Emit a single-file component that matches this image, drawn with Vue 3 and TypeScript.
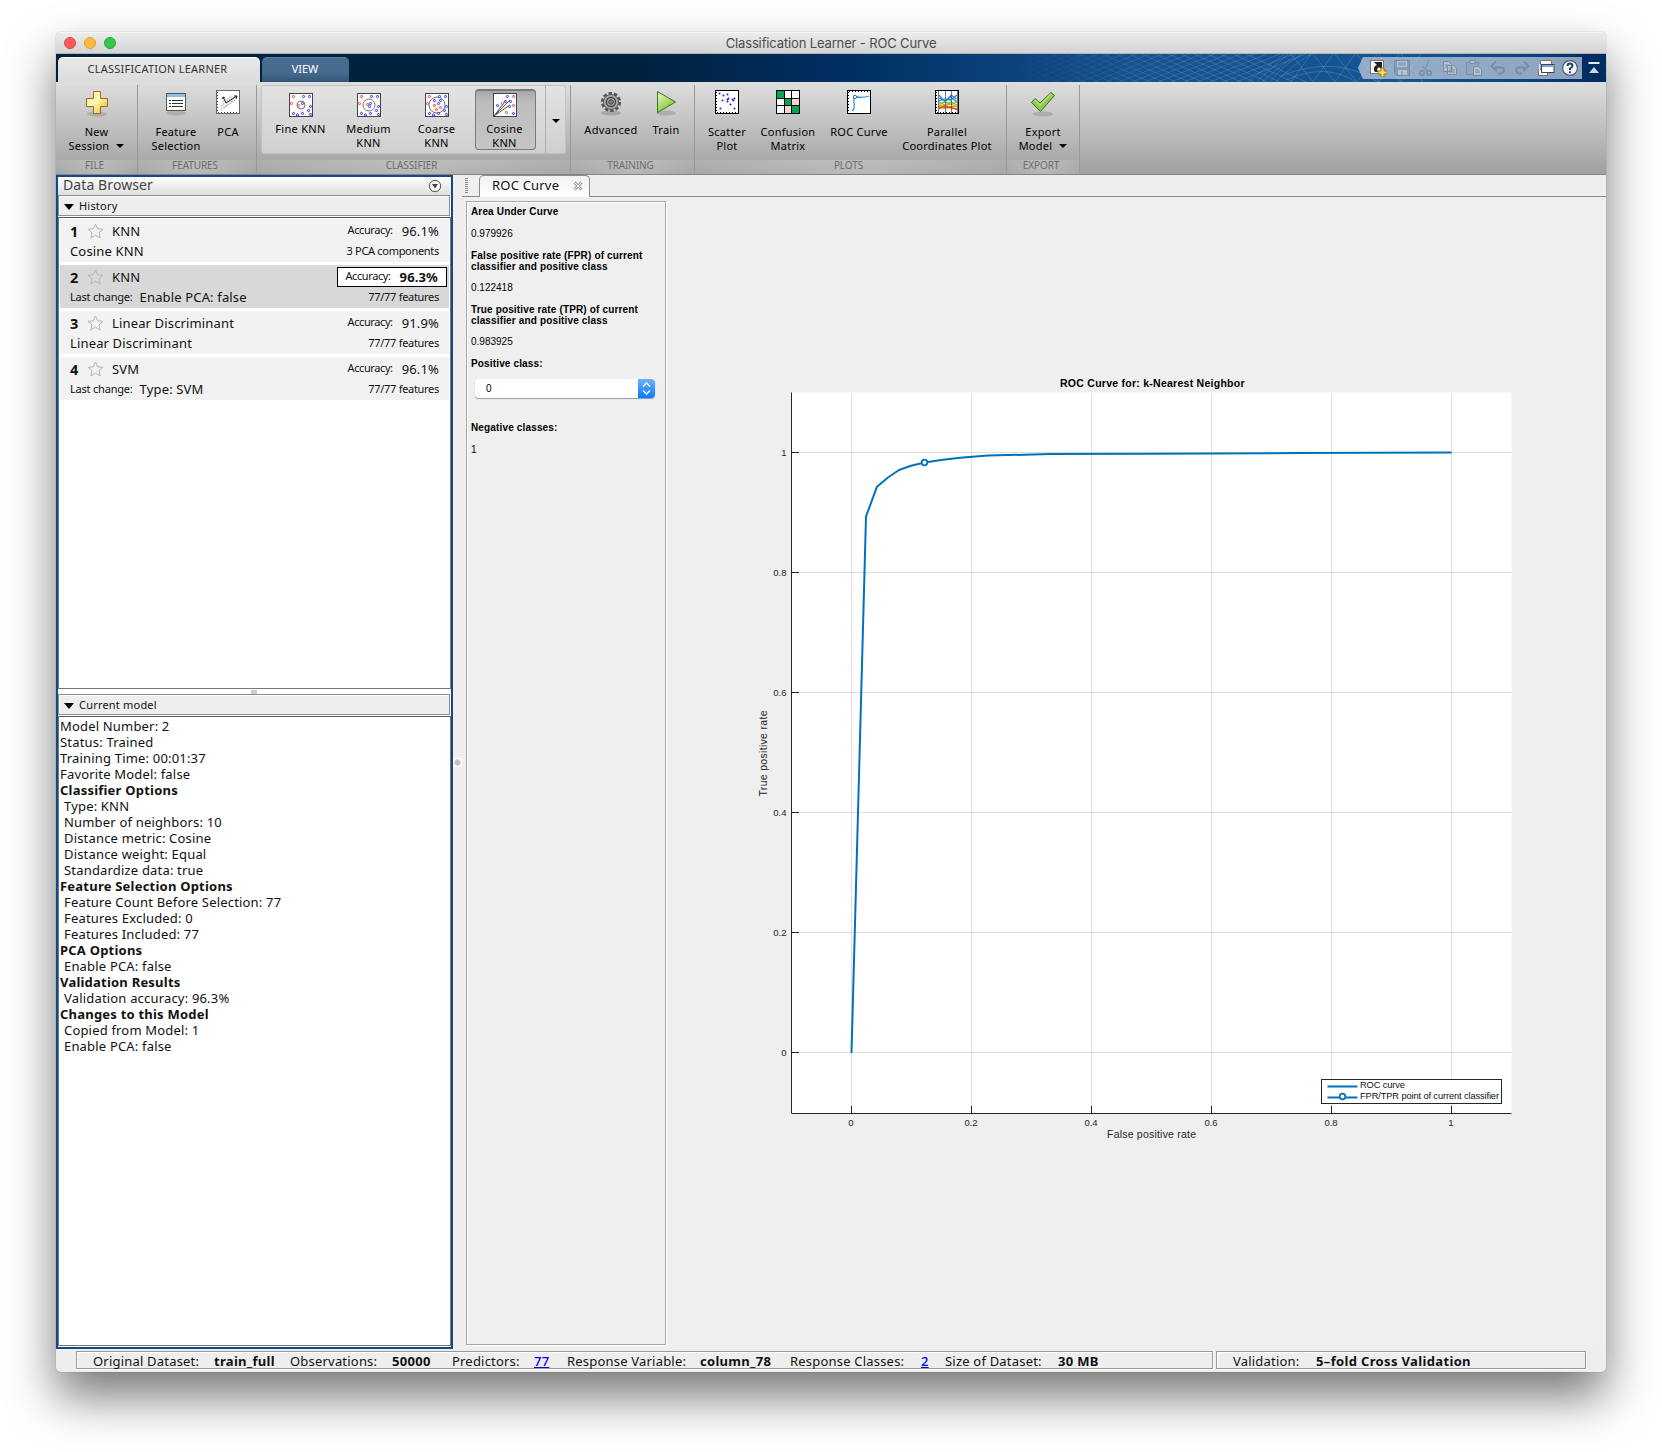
<script setup lang="ts">
interface Model {
  id: number
  name: string
  prefix?: string
  detail: string
  accuracy: string
  features: string
  selected?: boolean
}

const models: Model[] = [
  { id: 1, name: 'KNN', detail: 'Cosine KNN', accuracy: '96.1%', features: '3 PCA components' },
  { id: 2, name: 'KNN', prefix: 'Last change:', detail: 'Enable PCA: false', accuracy: '96.3%', features: '77/77 features', selected: true },
  { id: 3, name: 'Linear Discriminant', detail: 'Linear Discriminant', accuracy: '91.9%', features: '77/77 features' },
  { id: 4, name: 'SVM', prefix: 'Last change:', detail: 'Type: SVM', accuracy: '96.1%', features: '77/77 features' },
]

interface Line { text: string; heading?: boolean; top?: boolean }
const details: Line[] = [
  { text: 'Model Number: 2', top: true },
  { text: 'Status: Trained', top: true },
  { text: 'Training Time: 00:01:37', top: true },
  { text: 'Favorite Model: false', top: true },
  { text: 'Classifier Options', heading: true },
  { text: 'Type: KNN' },
  { text: 'Number of neighbors: 10' },
  { text: 'Distance metric: Cosine' },
  { text: 'Distance weight: Equal' },
  { text: 'Standardize data: true' },
  { text: 'Feature Selection Options', heading: true },
  { text: 'Feature Count Before Selection: 77' },
  { text: 'Features Excluded: 0' },
  { text: 'Features Included: 77' },
  { text: 'PCA Options', heading: true },
  { text: 'Enable PCA: false' },
  { text: 'Validation Results', heading: true },
  { text: 'Validation accuracy: 96.3%' },
  { text: 'Changes to this Model', heading: true },
  { text: 'Copied from Model: 1' },
  { text: 'Enable PCA: false' },
]

interface Dot { x: number; y: number; c: string }
const B = '#2020f0'
const R = '#f03030'
const rim: Dot[] = [
  { x: 4.5, y: 3.5, c: R }, { x: 14.5, y: 3.5, c: B }, { x: 20.5, y: 3.5, c: B },
  { x: 2.5, y: 10.5, c: R }, { x: 21.5, y: 13.5, c: B }, { x: 4.5, y: 20.5, c: B },
  { x: 8.5, y: 22, c: B }, { x: 13.5, y: 20.5, c: B }, { x: 19.5, y: 17.5, c: B }, { x: 21.5, y: 21.5, c: B },
]
interface Knn { key: string; label: string[]; r: number; dots: Dot[] }
const gallery: Knn[] = [
  { key: 'fine', label: ['Fine KNN'], r: 4, dots: [...rim, { x: 9.5, y: 12.5, c: R }, { x: 13.5, y: 10.5, c: B }] },
  { key: 'medium', label: ['Medium', 'KNN'], r: 6, dots: [...rim, { x: 10.5, y: 11.5, c: R }, { x: 13.5, y: 10.5, c: B }, { x: 12.5, y: 13.5, c: B }] },
  { key: 'coarse', label: ['Coarse', 'KNN'], r: 8, dots: [...rim, { x: 9.5, y: 7.5, c: B }, { x: 15.5, y: 7.5, c: B }, { x: 13.5, y: 10.5, c: B }, { x: 9.5, y: 12.5, c: R }, { x: 15.5, y: 14.5, c: R }, { x: 11.5, y: 16.5, c: R }] },
  { key: 'cosine', label: ['Cosine', 'KNN'], r: 0, dots: [{ x: 14.5, y: 3.5, c: B }, { x: 20.5, y: 3.5, c: R }, { x: 9.5, y: 10.5, c: R }, { x: 12.5, y: 8.5, c: B }, { x: 17.5, y: 8.5, c: B }, { x: 4.5, y: 12.5, c: B }, { x: 16.5, y: 13.5, c: B }, { x: 20.5, y: 12.5, c: R }, { x: 13.5, y: 19.5, c: R }, { x: 20.5, y: 20.5, c: B }] },
]

const ticks = [0, 0.2, 0.4, 0.6, 0.8, 1]
const px = (v: number) => 185.5 + v * 600
const py = (v: number) => 855.5 - v * 600
const curve: [number, number][] = [
  [851.5, 1053], [866, 516.5], [877, 486.7], [888, 477.5], [899, 470], [911, 465.8], [924.5, 462.5],
  [943, 459.7], [960, 457.8], [988, 455.6], [1050, 454.1], [1150, 453.7], [1300, 453.1], [1451.5, 452.5],
]
const curvePoints = curve.map(([x, y]) => `${x - 666},${y - 197}`).join(' ')

const scatter = [[4, 3], [8, 5], [12, 4], [7, 10], [13, 8], [12, 11], [17, 9], [19, 8], [15, 14], [5, 18], [19, 18], [12, 9], [18, 10]]
const meshLeft = Array.from({ length: 21 }, (_, i) => i * 13)
const meshRight = Array.from({ length: 6 }, (_, i) => 285 + i * 22)
</script>

<template>
  <div class="stage">
    <div class="window">
      <header class="titlebar">
        <span class="lights"><i class="red"></i><i class="amber"></i><i class="green"></i></span>
        <span class="wtitle">Classification Learner - ROC Curve</span>
      </header>

      <nav class="tabbar">
        <svg class="mesh" width="420" height="28" viewBox="0 0 420 28">
          <defs>
            <linearGradient id="fade" gradientUnits="userSpaceOnUse" x1="10" y1="0" x2="400" y2="0"><stop offset="0" stop-color="#fff" stop-opacity="0" /><stop offset=".4" stop-color="#fff" stop-opacity=".12" /><stop offset="1" stop-color="#fff" stop-opacity=".16" /></linearGradient>
          </defs>
          <g fill="none" stroke="url(#fade)">
            <path v-for="x in meshLeft" :key="'a' + x" :d="`M${x - 20} 0L${x + 40} 28`" />
            <path v-for="x in meshLeft" :key="'b' + x" :d="`M${x + 40} 0L${x - 30} 28`" />
            <path v-for="x in meshRight" :key="'c' + x" :d="`M${x} 0L${x + 22} 28M${x + 20} 0L${x} 28`" />
            <path d="M242 28L278 0M250 28L282 0M256 28L290 0M270 28Q285 12 305 0M264 28Q278 10 296 0M275 22Q330 0 372 28M280 26Q320 8 350 28" />
          </g>
        </svg>
        <div class="tab active">CLASSIFICATION LEARNER</div>
        <div class="tab">VIEW</div>
        <div class="quick">
          <svg class="quickshape" width="224" height="22" viewBox="0 0 224 22"><path d="M0 11L5 0H224V22H5Z" fill="#c4cfdd" fill-opacity=".72" /></svg>
          <svg width="18" height="18" viewBox="0 0 18 18"><rect x="1.500" y="1.500" width="13" height="13" fill="#fff" stroke="#777" /><rect x="3" y="3" width="10" height="10" fill="#f6f6f6" /><path d="M5 3h8v8l-3-3-2 2 1 3H6C4 10 5 7 8 6Z" fill="#222" /><path d="M12 9h3v3h3v3h-3v3h-3v-3H9v-3h3Z" fill="#ffdf63" stroke="#a17413" /></svg>
          <svg class="dim" width="18" height="18" viewBox="0 0 18 18"><path d="M1.500 1.500h15v15h-13l-2-2Z" fill="#8499b1" stroke="#73849a" /><path d="M4 2h10v6H4ZM5 11h9v5H5Z" fill="#bccad8" /><path d="M5 4h8M5 6h8M9 12v4" stroke="#73849a" /></svg>
          <svg class="dim" width="18" height="18" viewBox="0 0 18 18"><path d="M12 1L8 11M5 7l6 5" stroke="#8292a8" stroke-width="1.500" /><circle cx="5" cy="14" r="2.200" fill="none" stroke="#73849a" stroke-width="1.500" /><circle cx="12" cy="14" r="2.200" fill="none" stroke="#73849a" stroke-width="1.500" /></svg>
          <svg class="dim" width="18" height="18" viewBox="0 0 18 18"><path d="M2.500 2.500h5l3 3v7h-8ZM6.500 6.500h6l3 3v6h-9Z" fill="#bccad8" stroke="#73849a" /><path d="M4 6h4M4 8h2M8 9h4M8 11h6M8 13h6" stroke="#73849a" /></svg>
          <svg class="dim" width="18" height="18" viewBox="0 0 18 18"><path d="M1.500 3.500h12v12h-12Z" fill="#94a6bb" stroke="#73849a" /><path d="M5 1.500h5v3H5Z" fill="#bccad8" stroke="#73849a" /><path d="M8.500 7.500h5l3 3v6h-8Z" fill="#bccad8" stroke="#73849a" /><path d="M10 11h4M10 13h5" stroke="#73849a" /></svg>
          <svg class="dim" width="18" height="18" viewBox="0 0 18 18"><path d="M7 2.500L2.500 7 7 11.500V8.500h5q3 0 3 2.500t-3 3.500H9" fill="none" stroke="#73849a" stroke-width="1.800" /></svg>
          <svg class="dim" width="18" height="18" viewBox="0 0 18 18"><path d="M11 2.500L15.500 7 11 11.500V8.500H6q-3 0-3 2.500t3 3.500h3" fill="none" stroke="#73849a" stroke-width="1.800" /></svg>
          <svg width="18" height="18" viewBox="0 0 18 18"><path d="M3.500 1.500h11v4h-11ZM1.500 10.500h9v6h-9Z" fill="#f7f7f7" stroke="#777" /><path d="M2.500 5v6" stroke="#eee" /><rect x="4.500" y="5.500" width="12.500" height="8" fill="#fff" stroke="#445" /><path d="M5 6h11.500v2H5Z" fill="#72a8dc" /></svg>
          <svg width="18" height="18" viewBox="0 0 18 18"><circle cx="9" cy="9" r="7.400" fill="#f5f5f5" stroke="#465d7b" stroke-width="1.200" /><path d="M6.500 7q0-2.500 2.500-2.500T11.500 7Q11.500 8 9 9.500v1.500M9 12.300v2" fill="none" stroke="#21436d" stroke-width="2" /></svg>
        </div>
        <svg class="collapse" width="12" height="12" viewBox="0 0 12 12"><path d="M.5 1h11" stroke="#e6edf4" stroke-width="2" /><path d="M6 5l5 6H1Z" fill="#c9d7e6" /></svg>
      </nav>

      <section class="ribbon">
        <div class="group g-file">
          <div class="tools">
            <button class="tool t-new">
              <svg width="26" height="30" viewBox="0 0 26 30"><defs><linearGradient id="gold" x2="1" y2="1"><stop offset="0" stop-color="#ffe98f" /><stop offset=".45" stop-color="#fff8b8" /><stop offset="1" stop-color="#eab216" /></linearGradient></defs><ellipse cx="13" cy="25" rx="10" ry="2.500" fill="#777" opacity=".35" /><path d="M9.500 2.500h7v7h7v8h-7v7h-7v-7h-7v-8h7Z" fill="url(#gold)" stroke="#957126" /></svg>
              <span>New</span><span>Session<i class="caret"></i></span>
            </button>
          </div>
          <footer>FILE</footer>
        </div>
        <div class="group g-features">
          <div class="tools">
            <button class="tool t-feature">
              <svg width="26" height="30" viewBox="0 0 26 30"><ellipse cx="13" cy="24" rx="10" ry="2.500" fill="#777" opacity=".3" /><rect x="3.500" y="4.500" width="19" height="17" fill="#fff" stroke="#555" /><path d="M4 5h18v3H4Z" fill="#8cc0e8" /><path d="M9 11.500h11M9 14.500h11M9 17.500h11M6 11.500h2M6 14.500h2M6 17.500h2" stroke="#333" /></svg>
              <span>Feature</span><span>Selection</span>
            </button>
            <button class="tool t-pca">
              <svg width="26" height="30" viewBox="0 0 26 30"><rect x="1.500" y="1.500" width="23" height="23" fill="#fff" stroke="#666" /><path d="M2.500 3v20M3 23.500h20" stroke="#444" stroke-dasharray="1 2" /><g stroke="#bbb" stroke-width="1.500" stroke-dasharray="1.500 1"><path d="M6 17l13-9M6 20l12-8M9 19l12-9M8 13l9-6" /></g><path d="M11 14l11-7M11 14L8 8M19 7h3l-1 3M7 10l1-2 2 1" fill="none" stroke="#222" /></svg>
              <span>PCA</span>
            </button>
          </div>
          <footer>FEATURES</footer>
        </div>
        <div class="group g-classifier">
          <div class="tools">
            <div class="gallery">
              <button v-for="g in gallery" :key="g.key" class="gtool" :class="[g.key, { on: g.key === 'cosine' }]">
                <svg width="24" height="24" viewBox="0 0 24 24"><rect x=".5" y=".5" width="23" height="23" fill="#fff" stroke="#444" />
                  <circle v-if="g.r" cx="12" cy="12" :r="g.r" fill="none" stroke="#777" />
                  <path v-else d="M1 23L17 7M1 23L13 7M1 23L17 12" fill="none" stroke="#555" />
                  <circle v-for="(d, i) in g.dots" :key="i" :cx="d.x" :cy="d.y" r="1.100" fill="#fff" :stroke="d.c" stroke-width=".9" />
                </svg>
                <span v-for="l in g.label" :key="l">{{ l }}</span>
              </button>
              <div class="more"><i class="caret"></i></div>
            </div>
          </div>
          <footer>CLASSIFIER</footer>
        </div>
        <div class="group g-training">
          <div class="tools">
            <button class="tool t-adv short">
              <svg width="26" height="30" viewBox="0 0 26 30"><ellipse cx="13" cy="24" rx="10" ry="2.500" fill="#666" opacity=".35" /><circle cx="13" cy="13" r="8.800" fill="none" stroke="#555" stroke-width="2.600" stroke-dasharray="3.500 2.030" /><circle cx="13" cy="13" r="7.500" fill="#aaa" stroke="#555" /><circle cx="13" cy="13" r="4.500" fill="#bbb" stroke="#444" stroke-width="1.500" /><circle cx="13" cy="13" r="2.300" fill="#888" stroke="#333" /></svg>
              <span>Advanced</span>
            </button>
            <button class="tool t-train short">
              <svg width="26" height="30" viewBox="0 0 26 30"><defs><linearGradient id="play" x2=".6" y2="1"><stop offset="0" stop-color="#f0f8cd" /><stop offset="1" stop-color="#7cc421" /></linearGradient></defs><ellipse cx="13" cy="24" rx="10" ry="2.500" fill="#777" opacity=".35" /><path d="M4.500 2.500L22.500 13 4.500 23.500Z" fill="url(#play)" stroke="#35751f" /></svg>
              <span>Train</span>
            </button>
          </div>
          <footer>TRAINING</footer>
        </div>
        <div class="group g-plots">
          <div class="tools">
            <button class="tool t-scatter">
              <svg width="26" height="30" viewBox="0 0 26 30"><rect x="1.500" y="1.500" width="23" height="23" fill="#fff" stroke="#000" /><path d="M2.500 3v20M3 23.500h20" stroke="#000" stroke-dasharray="1 2" /><circle v-for="([x, y], i) in scatter" :key="i" :cx="x + 1.5" :cy="y + 1.5" r="1" fill="#2020f0" /></svg>
              <span>Scatter</span><span>Plot</span>
            </button>
            <button class="tool t-conf">
              <svg width="26" height="30" viewBox="0 0 26 30"><rect x="1.500" y="1.500" width="23" height="23" fill="#fff" stroke="#000" /><path d="M2 2h7v7H2ZM10 10h7v7h-7ZM17 17h7v7h-7Z" fill="#00a651" /><path d="M17 10h7v7h-7ZM10 17h7v7h-7Z" fill="#fdd5d0" /><path d="M9.500 2v22M16.500 2v22M2 9.500h22M2 16.500h22" stroke="#000" /></svg>
              <span>Confusion</span><span>Matrix</span>
            </button>
            <button class="tool t-roc">
              <svg width="26" height="30" viewBox="0 0 26 30"><rect x="1.500" y="1.500" width="23" height="23" fill="#fff" stroke="#000" /><path d="M2.500 3v20M3 2.500h20" stroke="#000" stroke-dasharray="1 2" /><path d="M6 22Q9 20 8 14T11 8q7 1 12-1" fill="none" stroke="#3c8ee8" stroke-width="1.300" /><circle cx="9" cy="8" r="1.700" fill="#fff" stroke="#1b78dd" /></svg>
              <span>ROC Curve</span>
            </button>
            <button class="tool t-par">
              <svg width="26" height="30" viewBox="0 0 26 30"><rect x="1.500" y="1.500" width="23" height="23" fill="#fff" stroke="#000" /><path d="M2.500 3v20M3 23.500h20" stroke="#000" stroke-dasharray="1 2" /><g fill="none" stroke-width="1.300"><path d="M5 6l6 7 6-7 6 4M5 9l6 3 6-4 6 5M5 12l6-2 6 1 6-5" stroke="#2683ee" /><path d="M5 15l6-2 6 2 6-2M5 13l6 3 6-3 6 3" stroke="#73c72b" /><path d="M5 17l6-1 6-1 6 3M5 16l6 1 6 1 6-1" stroke="#e5a91d" /><path d="M5 20l6-3 6 2 6 1M5 18l6 1 6-1 6 3" stroke="#f0491c" /></g><path d="M4.500 2v22M11.500 2v22M17.500 2v22M23.500 2v22" stroke="#555" stroke-width=".8" /></svg>
              <span>Parallel</span><span>Coordinates Plot</span>
            </button>
          </div>
          <footer>PLOTS</footer>
        </div>
        <div class="group g-export">
          <div class="tools">
            <button class="tool t-export">
              <svg width="26" height="30" viewBox="0 0 26 30"><ellipse cx="13" cy="25" rx="10" ry="2.500" fill="#777" opacity=".35" /><path d="M1.500 13.500L5 9.500l5 4.500L21 3.500l3.500 3L10.500 22.500Z" fill="#8fce4a" stroke="#2f6e28" /><path d="M5 11l5 5L21 5" fill="none" stroke="#b5e277" stroke-width="1.500" /></svg>
              <span>Export</span><span>Model<i class="caret"></i></span>
            </button>
          </div>
          <footer>EXPORT</footer>
        </div>
      </section>

      <main class="body">
        <aside class="browser">
          <div class="btitle"><span>Data Browser</span>
            <svg width="14" height="14" viewBox="0 0 14 14"><circle cx="7" cy="7" r="5.700" fill="#f5f5f5" stroke="#555" /><path d="M4 5h6L7 9.500Z" fill="#444" /></svg>
          </div>
          <div class="bhead"><i class="tri"></i>History</div>
          <div class="list">
            <div v-for="m in models" :key="m.id" class="item" :class="{ sel: m.selected }">
              <div class="row r1">
                <b>{{ m.id }}</b>
                <svg width="17" height="16" viewBox="0 0 17 16"><path d="M8.500 1l2.200 4.800 5.300.5-4 3.500 1.200 5.200-4.700-2.800L3.800 15 5 9.800 1 6.300l5.300-.5Z" fill="none" stroke="#b4b4b4" /></svg>
                <span class="mname">{{ m.name }}</span>
                <span class="acc"><small>Accuracy:</small><span>{{ m.accuracy }}</span></span>
              </div>
              <div class="row r2">
                <small v-if="m.prefix" class="pre">{{ m.prefix }}</small>
                <span>{{ m.detail }}</span>
                <small class="feat">{{ m.features }}</small>
              </div>
            </div>
          </div>
          <div class="hsplit"><i></i></div>
          <div class="bhead">
            <i class="tri"></i>Current model
          </div>
          <div class="details">
            <div v-for="(l, i) in details" :key="i" :class="{ heading: l.heading, sub: !l.heading && !l.top }">{{ l.text }}</div>
          </div>
        </aside>

        <div class="vsplit"><i></i></div>

        <div class="doc">
          <div class="doctabs">
            <i class="grip"></i>
            <div class="doctab">ROC Curve<svg width="10" height="10" viewBox="0 0 10 10"><path d="M1.500 1.500l7 7M8.500 1.500l-7 7" stroke="#a2a2a2" stroke-width="3" /><path d="M1.500 1.500l7 7M8.500 1.500l-7 7" stroke="#f4f4f4" stroke-width="1" /></svg></div>
          </div>
          <div class="docbody">
            <div class="side">
              <h4>Area Under Curve</h4>
              <p>0.979926</p>
              <h4 class="two">False positive rate (FPR) of current<br>classifier and positive class</h4>
              <p>0.122418</p>
              <h4 class="two">True positive rate (TPR) of current<br>classifier and positive class</h4>
              <p>0.983925</p>
              <h4>Positive class:</h4>
              <div class="select"><span>0</span><svg width="17" height="19" viewBox="0 0 17 19"><path d="M5 7.500L8.500 4 12 7.500M5 11.500L8.500 15 12 11.500" fill="none" stroke="#fff" stroke-width="1.500" /></svg></div>
              <h4>Negative classes:</h4>
              <p>1</p>
            </div>
            <svg class="chart" width="940" height="1152" viewBox="0 0 940 1152">
              <rect x="126" y="195.500" width="719.500" height="720.500" fill="#fff" />
              <g stroke="#262626" stroke-opacity=".15">
                <path v-for="t in ticks" :key="t" :d="`M${px(t)} 196V916M126 ${py(t)}H845.5`" />
              </g>
              <g stroke="#262626">
                <path d="M125.500 195.500V916.500H845.500" fill="none" />
                <path v-for="t in ticks" :key="t" :d="`M${px(t)} 916v-7M126 ${py(t)}h7`" />
              </g>
              <g class="ticks">
                <text v-for="t in ticks" :key="'x' + t" :x="px(t) - .5" y="929" text-anchor="middle">{{ t }}</text>
                <text v-for="t in ticks" :key="'y' + t" x="120.500" :y="py(t) + 3.5" text-anchor="end">{{ t }}</text>
              </g>
              <text class="axis" x="441" y="941" textLength="89">False positive rate</text>
              <text class="axis" transform="translate(101 599.500) rotate(-90)" textLength="86">True positive rate</text>
              <text class="ctitle" x="394" y="190" textLength="184.500">ROC Curve for: k-Nearest Neighbor</text>
              <polyline :points="curvePoints" fill="none" stroke="#0072bd" stroke-width="2" stroke-linejoin="round" />
              <circle cx="258.500" cy="265.500" r="2.800" fill="#fff" stroke="#0072bd" stroke-width="1.700" />
              <rect x="655.500" y="882.500" width="180" height="24" fill="#fff" stroke="#262626" />
              <path d="M661.500 889.500h30M661.500 900.500h30" stroke="#0072bd" stroke-width="2" />
              <circle cx="676.500" cy="899.500" r="2.800" fill="#fff" stroke="#0072bd" stroke-width="1.700" />
              <g class="legend">
                <text x="694" y="891" textLength="45">ROC curve</text>
                <text x="694" y="902" textLength="139">FPR/TPR point of current classifier</text>
              </g>
            </svg>
          </div>
        </div>
      </main>

      <footer class="status">
        <div class="sbox data">
          <span class="k1">Original Dataset:</span><b class="v1">train_full</b>
          <span class="k2">Observations:</span><b class="v2">50000</b>
          <span class="k3">Predictors:</span><a class="v3">77</a>
          <span class="k4">Response Variable:</span><b class="v4">column_78</b>
          <span class="k5">Response Classes:</span><a class="v5">2</a>
          <span class="k6">Size of Dataset:</span><b class="v6">30 MB</b>
        </div>
        <div class="sbox valid"><span class="k7">Validation:</span><b class="fold">5–fold Cross Validation</b></div>
      </footer>
    </div>
  </div>
</template>

<style>
body { background: #fff; overflow: hidden; }
</style>

<style scoped>
* { box-sizing: border-box; }
.stage { width: 1662px; height: 1452px; padding: 32px 56px 80px; overflow: hidden; background: #fff; font-family: "Noto Sans", "Open Sans", sans-serif; color: #111; }
.window { width: 1550px; height: 1340px; display: flex; flex-direction: column; border-radius: 5px; background: #eee; box-shadow: 0 0 1px rgba(0,0,0,.5), 0 25px 48px rgba(0,0,0,.53); overflow: visible; }
.titlebar { flex: none; height: 22px; display: grid; place-items: center; border-radius: 5px 5px 0 0; background: linear-gradient(#ebebeb, #d4d4d4); border-bottom: 1px solid #b3b3b3; border-top: 1px solid #f6f6f6; }
.titlebar > * { grid-area: 1 / 1; }
.lights { justify-self: start; display: flex; gap: 8px; padding-left: 8px; margin-top: -1px; }
.lights i { width: 12px; height: 12px; border-radius: 50%; border: 1px solid #e0443e; background: #fc5b57; }
.lights .amber { border-color: #dfa033; background: #fdbc40; }
.lights .green { border-color: #24a732; background: #34c84a; }
.wtitle { font: 13px/20px Inter, sans-serif; color: #4c4c4c; letter-spacing: -.14px; }

.tabbar { position: relative; flex: none; height: 28px; display: flex; align-items: flex-end; padding-left: 2px; background: linear-gradient(90deg, #00213d 0, #00213d 570px, #003064 800px, #0b3f78 930px, #15518f 1080px, #145595 1350px, #0b4380 1470px, #002d62 1530px); }
.mesh { position: absolute; left: 950px; top: 0; }
.tab { height: 25px; width: 87px; margin-right: 2px; border-radius: 5px 5px 0 0; display: flex; align-items: center; justify-content: center; padding: 0 1px 3px 0; font-size: 11px; letter-spacing: -.1px; color: #fff; background: linear-gradient(#486b90 60%, #315479); border-top: 1px solid #5f7e9f; }
.tab.active { width: 202px; background: linear-gradient(#e8e8e8, #dcdcdc); color: #333; border-top-color: #fff; letter-spacing: .22px; padding-right: 3px; }
.quick { position: relative; margin-left: auto; margin-bottom: 3px; height: 22px; width: 224px; padding-left: 11px; display: flex; align-items: center; gap: 6px; }
.quick svg { position: relative; flex: none; }
.quick .quickshape { position: absolute; left: 0; top: 0; }
.dim { opacity: .8; }
.collapse { margin: 0 6px 8px 6px; }

.ribbon { flex: none; height: 93px; display: flex; background: linear-gradient(#dedede, #a0a0a0); border-bottom: 1px solid #858585; padding-top: 3px; }
.group { display: flex; flex-direction: column; height: 87px; border-right: 1px solid #999; }
.g-file { width: 82px; }
.g-features { width: 119px; }
.g-classifier { width: 314px; }
.g-training { width: 124px; }
.g-plots { width: 312px; }
.g-export { width: 73px; }
.tools { flex: 1; display: flex; }
.group footer { height: 14px; margin-bottom: -2px; padding-right: 4px; text-align: center; font-size: 10px; line-height: 11px; color: #6c6c6c; background: linear-gradient(90deg, rgba(255,255,255,.08), rgba(255,255,255,.25), rgba(255,255,255,.08)); letter-spacing: -.1px; }
button { border: 0; background: none; padding: 0; font: inherit; color: #000; }
.tool { display: flex; flex-direction: column; align-items: center; justify-content: flex-start; padding-top: 4px; font-size: 11px; line-height: 14px; letter-spacing: .25px; white-space: nowrap; }
.tool svg { margin-bottom: 6px; }
.tool.short svg { margin-bottom: 4px; }
.caret { display: inline-block; border: 4px solid transparent; border-top-color: #000; border-bottom: 0; margin-left: 7px; vertical-align: 2px; }
.t-new { width: 81px; }
.t-feature { width: 60px; margin-left: 8px; }
.t-pca { width: 30px; margin-left: 7px; }
.t-adv { width: 60px; margin-left: 10px; letter-spacing: .35px; }
.t-train { width: 40px; margin-left: 5px; }
.t-scatter { width: 50px; margin-left: 7px; }
.t-conf { width: 60px; margin-left: 6px; }
.t-roc { width: 70px; margin-left: 6px; }
.t-par { width: 100px; margin-left: 3px; }
.t-export { width: 72px; }
.gallery { width: 305px; height: 69px; margin-left: 4px; display: flex; border: 1px solid #c2c2c2; border-radius: 3px; background: linear-gradient(#e3e3e3, #cfcfcf); }
.gtool { display: flex; flex-direction: column; align-items: center; justify-content: flex-start; width: 61px; height: 61px; margin-top: 3px; padding-top: 3px; border: 1px solid transparent; border-radius: 4px; font-size: 11px; line-height: 14px; letter-spacing: .3px; white-space: nowrap; }
.gtool svg { margin-bottom: 5px; flex: none; }
.fine { margin-left: 8px; }
.medium { margin-left: 7px; }
.coarse { margin-left: 7px; }
.cosine { margin-left: 8px; }
.gtool.on { border: 1px solid #7a7a7a; border-top-width: 2px; padding: 2px 2px 0 0; background: linear-gradient(#a8a8a8, #bdbdbd 20%, #c5c5c5); }
.more { flex: 1; margin-left: 9px; border-left: 1px solid #b0b0b0; display: flex; align-items: center; justify-content: center; }
.more .caret { margin: 3px 0 0; }

.body { flex: 1; min-height: 0; display: flex; }
.browser { width: 397px; height: 1174px; border: 2px solid #124a87; background: #fff; display: flex; flex-direction: column; }
.btitle { flex: none; height: 18px; display: flex; justify-content: space-between; align-items: center; padding: 0 9px 1px 5px; font-size: 14px; line-height: 16px; letter-spacing: .1px; color: #444; background: linear-gradient(#fff, #dedede); }
.btitle span { margin-top: -1px; }
.bhead { flex: none; height: 21px; margin: 0 1px 1px 0; border: 1px solid #8e8e8e; background: #eee; box-shadow: inset 1px 1px 0 #fff; display: flex; align-items: center; padding: 0 0 0 5px; font-size: 11px; letter-spacing: .2px; }
.tri { border: 5.5px solid transparent; border-top: 6px solid #000; border-bottom: 0; margin: 2px 5px 0 0; }
.list { flex: none; height: 472px; border: 1px solid #777; border-top-color: #555; padding: 1px 1px 0; }
.item { height: 43px; margin-bottom: 3px; background: #f2f2f2; padding: 0 10px; font-size: 13px; }
.item.sel { background: #d8d8d8; }
.row { display: flex; align-items: center; height: 20px; white-space: nowrap; letter-spacing: .15px; }
.r1 { height: 24px; padding-bottom: 1px; }
.row b { width: 17px; font-size: 14.5px; }
.mname { margin-left: 8px; }
small { font-size: 11px; letter-spacing: -.2px; padding-bottom: 2px; }
.acc { margin-left: auto; display: flex; align-items: center; gap: 9px; height: 20px; }
.acc small { letter-spacing: -.4px; }
.sel .acc { background: #fff; border: 1px solid #000; margin-right: -8px; padding: 0 8px 0 7px; }
.sel .acc > span { font-weight: 700; }
.r2 { height: 17px; line-height: 17px; }
.pre { margin-right: 7px; }
.feat { margin-left: auto; letter-spacing: -.3px; }
.hsplit { flex: none; height: 5px; display: flex; align-items: center; justify-content: center; padding-right: 2px; }
.hsplit i { width: 6px; height: 4px; background: #ccc; }
.details { flex: 1; margin-bottom: 1px; border: 1px solid #777; border-top-color: #555; padding: 1px 1px 0; font-size: 13px; line-height: 16px; letter-spacing: .18px; }
.sub { padding-left: 4px; }
.heading { font-weight: 700; letter-spacing: .22px; }

.vsplit { width: 9px; }
.vsplit i { display: block; margin-top: 583px; width: 9px; height: 9px; background: radial-gradient(circle, #bbb 0, #ccc 3px, #fff 3.500px); }
.doc { flex: 1; min-width: 0; display: flex; flex-direction: column; height: 1174px; }
.doctabs { height: 22px; border-bottom: 1px solid #8b8b8b; display: flex; padding-left: 3px; }
.grip { width: 3px; height: 15px; margin: 3px 11px 0 0; background: repeating-linear-gradient(#888 0 1px, #eee 1px 2px); }
.doctab { height: 22px; width: 111px; border: 1px solid #8b8b8b; border-bottom: 0; border-radius: 5px 5px 0 0; background: linear-gradient(#f2f2f2, #fff); padding: 0 0 2px 12px; font-size: 13px; line-height: 19px; letter-spacing: .2px; display: flex; align-items: center; gap: 14px; white-space: nowrap; }
.doctab svg { margin-top: 1px; }
.docbody { flex: 1; display: flex; padding-left: 4px; background: #efefef; }
.side { width: 200px; height: 1144px; margin-top: 4px; border: 1px solid #a8a8a8; box-shadow: inset 1px 1px 0 #fff, 1px 1px 0 #fff; padding: 4px 0 0 4px; display: flex; flex-direction: column; gap: 11px; font: 10px/11px "Liberation Sans", sans-serif; white-space: nowrap; color: #000; }
.side h4, .side p { margin: 0; font-size: 10px; }
.side h4 { letter-spacing: .15px; }
.side .two { margin-bottom: -1px; }
.select { margin: -1px 0 13px 4px; width: 180px; height: 19px; border-radius: 4px; background: #fff; box-shadow: 0 1px 1px #999; display: flex; justify-content: space-between; align-items: center; padding-left: 11px; overflow: hidden; }
.select svg { background: linear-gradient(#6bb3fa, #087aff); }
.chart { display: block; font-family: "Liberation Sans", sans-serif; fill: #262626; flex: none; margin-right: -10px; }
.ticks { font-size: 9.5px; }
.axis { font-size: 10.5px; }
.ctitle { font-size: 10.5px; font-weight: 700; fill: #000; }
.legend { font-size: 9.3px; fill: #111; }

.status { flex: none; height: 23px; display: flex; gap: 3px; padding: 2px 20px 3px; border-radius: 0 0 5px 5px; background: #eee; }
.sbox { border: 1px solid #999; box-shadow: inset 1px 1px 0 #fff, 1px 1px 0 #fff; height: 18px; display: flex; align-items: center; padding-top: 2px; font-size: 13px; line-height: 16px; letter-spacing: .2px; white-space: nowrap; }
.sbox b { letter-spacing: .3px; }
.sbox .fold { letter-spacing: .35px; }
.data { width: 1137px; padding-left: 16px; }
.valid { width: 370px; padding-left: 16px; }
.k1 { width: 121px; } .v1 { width: 76px; } .k2 { width: 102px; } .v2 { width: 60px; } .k3 { width: 82px; } .v3 { width: 33px; }
.k4 { width: 133px; } .v4 { width: 90px; } .k5 { width: 131px; } .v5 { width: 24px; } .k6 { width: 113px; } .k7 { width: 83px; }
a { color: #0000f0; font-weight: 500; text-decoration: underline; }
</style>
